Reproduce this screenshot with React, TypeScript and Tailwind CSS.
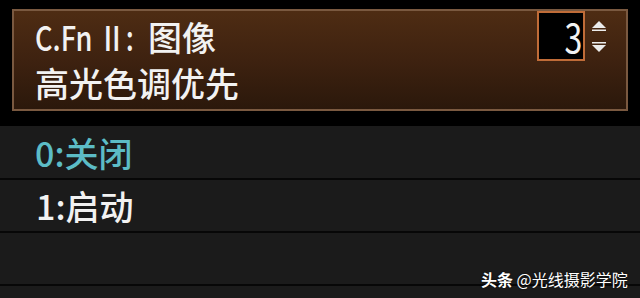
import React from "react";

const font = { fontFamily: '"Noto Sans CJK SC", "Noto Sans", sans-serif' };

export default function App() {
  return (
    <div className="relative w-[640px] h-[298px] bg-black overflow-hidden" style={font}>
      <div className="pt-[9px] px-[12px]">
        <div className="h-[102px] border-2 border-[#7a5940] bg-gradient-to-b from-[#4e2c13] via-[#3e2210] to-[#2b180b] flex justify-between pl-[21px] pr-[20px]">
          <div className="pt-[3px] text-[34px] leading-[46px] text-[#f2f2f2] font-medium">
            <div className="whitespace-nowrap">
              <span className="inline-block w-[113px] overflow-visible align-top">
                <span className="inline-block origin-left scale-x-[0.8]">C.Fn Ⅱ:</span>
              </span>
              图像
            </div>
            <div>高光色调优先</div>
          </div>
          <div className="flex items-start gap-[7px]">
            <div className="w-[48px] h-[50px] border-2 border-[#c06c38] bg-black flex items-center justify-end pr-[1px] text-[40px] leading-none text-[#f2f2f2]">
              <span className="inline-block origin-right scale-x-[0.8]">3</span>
            </div>
            <div className="flex flex-col items-center pt-[10px] w-[14px]">
              <svg width="14" height="10" viewBox="0 0 14 10">
                <polygon points="7,0 14,7 0,7" fill="#ececec" />
                <rect x="0" y="8.5" width="14" height="1.5" fill="#ececec" />
              </svg>
              <div className="h-[11px]" />
              <svg width="14" height="10" viewBox="0 0 14 10">
                <rect x="0" y="0" width="14" height="1.5" fill="#ececec" />
                <polygon points="0,3 14,3 7,10" fill="#ececec" />
              </svg>
            </div>
          </div>
        </div>
      </div>
      <div className="mt-[15px] flex flex-col">
        <div className="h-[52px] bg-[#1b1b1b] flex items-center pl-[35px] text-[34px] text-[#5cbcc6] font-medium">0:关闭</div>
        <div className="h-[2px] bg-[#070707]" />
        <div className="h-[51px] bg-[#1b1b1b] flex items-center pl-[36px] text-[34px] text-[#f2f2f2] font-medium">1:启动</div>
        <div className="h-[2px] bg-[#070707]" />
        <div className="h-[51px] bg-[#1b1b1b]" />
        <div className="h-[2px] bg-[#070707]" />
        <div className="h-[20px] bg-[#1b1b1b]" />
      </div>
      <div className="absolute left-[481px] top-[267px] text-[16px] leading-[24px] text-white [text-shadow:0_0_2px_rgba(0,0,0,0.8)] whitespace-nowrap">
        <span className="font-bold">头条</span> @光线摄影学院
      </div>
    </div>
  );
}
